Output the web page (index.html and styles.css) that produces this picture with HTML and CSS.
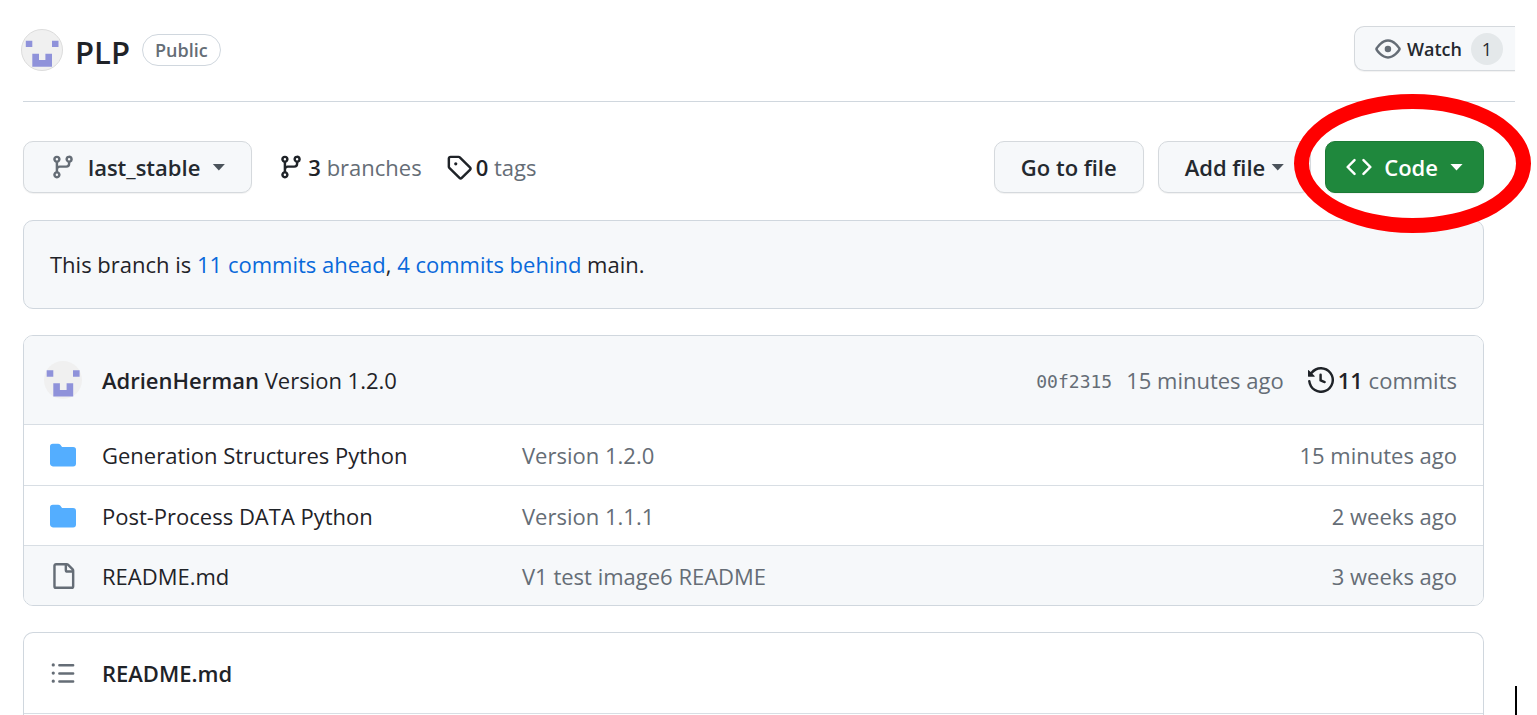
FILE: index.html
```html
<!DOCTYPE html>
<html lang="en">
<head>
<meta charset="utf-8">
<meta name="viewport" content="width=device-width, initial-scale=1">
<title>PLP</title>
<link rel="stylesheet" href="styles.css">
</head>
<body>
<svg class="sprite" aria-hidden="true">
  <symbol id="branch" viewBox="0 0 16 16"><path d="M9.5 3.25a2.25 2.25 0 1 1 3 2.122V6A2.5 2.5 0 0 1 10 8.5H6a1 1 0 0 0-1 1v1.128a2.251 2.251 0 1 1-1.5 0V5.372a2.25 2.25 0 1 1 1.5 0v1.836A2.493 2.493 0 0 1 6 7h4a1 1 0 0 0 1-1v-.628A2.25 2.25 0 0 1 9.5 3.25Zm-6 0a.75.75 0 1 0 1.5 0 .75.75 0 0 0-1.5 0Zm8.25-.75a.75.75 0 1 0 0 1.5.75.75 0 0 0 0-1.5ZM4.25 12a.75.75 0 1 0 0 1.5.75.75 0 0 0 0-1.5Z"/></symbol>
  <symbol id="folder" viewBox="0 0 16 16"><path d="M1.75 1A1.75 1.75 0 0 0 0 2.75v10.5C0 14.216.784 15 1.75 15h12.5A1.75 1.75 0 0 0 16 13.25v-8.5A1.75 1.75 0 0 0 14.25 3H7.5a.25.25 0 0 1-.2-.1l-.9-1.2C6.07 1.26 5.55 1 5 1H1.75Z"/></symbol>
</svg>

<header class="repo-header">
  <svg class="avatar avatar-large" viewBox="0 0 42 42"><circle cx="21" cy="21" r="20.500" fill="#f0f0f0" stroke="#dcdcdc"/><path fill="#8f92da" d="M4.800 11.700h6.500V18H4.800ZM31 11.700h6.500V18H31ZM11.300 24.700H18V31h6.400v-6.300H31v13H11.300Z"/></svg>
  <h1 class="repo-name">PLP</h1>
  <span class="visibility">Public</span>
  <button class="btn watch" type="button">
    <svg class="icon muted" viewBox="0 0 16 16"><path d="M8 2c1.981 0 3.671.992 4.933 2.078 1.27 1.091 2.187 2.345 2.637 3.023a1.62 1.62 0 0 1 0 1.798c-.45.678-1.367 1.932-2.637 3.023C11.67 13.008 9.981 14 8 14c-1.981 0-3.671-.992-4.933-2.078C1.797 10.83.88 9.576.43 8.898a1.62 1.62 0 0 1 0-1.798c.45-.677 1.367-1.931 2.637-3.022C4.33 2.992 6.019 2 8 2ZM1.679 7.932a.12.12 0 0 0 0 .136c.411.622 1.241 1.75 2.366 2.717C5.176 11.758 6.527 12.5 8 12.5c1.473 0 2.825-.742 3.955-1.715 1.124-.967 1.954-2.096 2.366-2.717a.12.12 0 0 0 0-.136c-.412-.621-1.242-1.75-2.366-2.717C10.824 4.242 9.473 3.5 8 3.5c-1.473 0-2.825.742-3.955 1.715-1.124.967-1.954 2.096-2.366 2.717ZM8 10a2 2 0 1 1-.001-3.999A2 2 0 0 1 8 10Z"/></svg>
    <span>Watch</span>
    <span class="counter">1</span>
  </button>
</header>

<main class="content">
  <div class="toolbar">
    <button class="btn branch-btn" type="button">
      <svg class="icon muted"><use href="#branch"/></svg>
      <span>last_stable</span>
      <span class="caret"></span>
    </button>
    <a class="stat" href="#"><svg class="icon"><use href="#branch"/></svg><span><strong>3</strong> branches</span></a>
    <a class="stat" href="#"><svg class="icon" viewBox="0 0 16 16"><path d="M1 7.775V2.75C1 1.784 1.784 1 2.75 1h5.025c.464 0 .91.184 1.238.513l6.25 6.25a1.75 1.75 0 0 1 0 2.474l-5.026 5.026a1.75 1.75 0 0 1-2.474 0l-6.25-6.25A1.752 1.752 0 0 1 1 7.775Zm1.5 0c0 .066.026.13.073.177l6.25 6.25a.25.25 0 0 0 .354 0l5.025-5.025a.25.25 0 0 0 0-.354l-6.25-6.25a.25.25 0 0 0-.177-.073H2.75a.25.25 0 0 0-.25.25ZM6 5a1 1 0 1 1 0 2 1 1 0 0 1 0-2Z"/></svg><span><strong>0</strong> tags</span></a>
    <div class="actions">
      <button class="btn" type="button">Go to file</button>
      <button class="btn add-file" type="button">Add file<span class="caret"></span></button>
      <div class="code-wrap">
        <button class="btn code-btn" type="button">
          <svg class="icon" viewBox="0 0 16 16"><path d="m11.28 3.22 4.25 4.25a.75.75 0 0 1 0 1.060l-4.25 4.25a.749.749 0 0 1-1.275-.326.749.749 0 0 1 .215-.734L13.940 8l-3.720-3.720a.749.749 0 0 1 .326-1.275.749.749 0 0 1 .734.215Zm-6.560 0a.751.751 0 0 1 1.042.018.751.751 0 0 1 .018 1.042L2.060 8l3.720 3.720a.749.749 0 0 1-.326 1.275.749.749 0 0 1-.734-.215L.47 8.530a.75.75 0 0 1 0-1.060Z"/></svg>
          <span>Code</span>
          <span class="caret"></span>
        </button>
        <div class="highlight-ring"></div>
      </div>
    </div>
  </div>

  <p class="box branch-status">This branch is <a href="#">11 commits ahead</a>, <a href="#">4 commits behind</a> main.</p>

  <section class="box files">
    <div class="latest-commit">
      <svg class="avatar" viewBox="0 0 38 38"><circle cx="19" cy="19" r="19" fill="#f0f0f0"/><path fill="#8f92da" d="M2.700 9.300h6.600v6.400H2.700ZM29 9.300h6.600v6.400H29ZM9.300 22.300h6.600V29h6.700v-6.700h6.600v13.300H9.300Z"/></svg>
      <span class="commit-text"><strong>AdrienHerman</strong> Version 1.2.0</span>
      <a class="hash" href="#">00f2315</a>
      <span class="commit-age">15 minutes ago</span>
      <a class="commits" href="#"><svg class="icon" viewBox="0 0 16 16"><path d="m.427 1.927 1.215 1.215a8.002 8.002 0 1 1-1.6 5.685.75.75 0 1 1 1.493-.154 6.5 6.5 0 1 0 1.180-4.458l1.358 1.358A.25.25 0 0 1 3.896 6H.25A.25.25 0 0 1 0 5.750V2.104a.25.25 0 0 1 .427-.177ZM7.750 4a.75.75 0 0 1 .75.75v2.992l2.028.812a.75.75 0 0 1-.557 1.392l-2.500-1A.751.751 0 0 1 7 8.250v-3.500A.75.75 0 0 1 7.750 4Z"/></svg><span><strong>11</strong> commits</span></a>
    </div>
    <table class="file-table">
      <tbody>
        <tr>
          <td class="col-icon"><svg class="icon folder"><use href="#folder"/></svg></td>
          <td class="col-name"><a href="#">Generation Structures Python</a></td>
          <td class="col-message">Version 1.2.0</td>
          <td class="col-age">15 minutes ago</td>
        </tr>
        <tr>
          <td class="col-icon"><svg class="icon folder"><use href="#folder"/></svg></td>
          <td class="col-name"><a href="#">Post-Process DATA Python</a></td>
          <td class="col-message">Version 1.1.1</td>
          <td class="col-age">2 weeks ago</td>
        </tr>
        <tr class="active">
          <td class="col-icon"><svg class="icon muted" viewBox="0 0 16 16"><path d="M2 1.75C2 .784 2.784 0 3.75 0h6.586c.464 0 .909.184 1.237.513l2.914 2.914c.329.328.513.773.513 1.237v9.586A1.75 1.75 0 0 1 13.25 16h-9.500A1.75 1.75 0 0 1 2 14.250Zm1.750-.250a.25.25 0 0 0-.25.25v12.500c0 .138.112.25.25.25h9.500a.25.25 0 0 0 .25-.25V6h-2.750A1.75 1.75 0 0 1 9 4.250V1.500Zm6.750.062V4.250c0 .138.112.25.25.25h2.688l-.011-.013-2.914-2.914-.013-.011Z"/></svg></td>
          <td class="col-name"><a href="#">README.md</a></td>
          <td class="col-message">V1 test image6 README</td>
          <td class="col-age">3 weeks ago</td>
        </tr>
      </tbody>
    </table>
  </section>

  <section class="box readme">
    <div class="readme-header">
      <svg class="icon muted" viewBox="0 0 16 16"><path d="M5.750 2.500h8.500a.75.75 0 0 1 0 1.500h-8.500a.75.75 0 0 1 0-1.500Zm0 5h8.500a.75.75 0 0 1 0 1.500h-8.500a.75.75 0 0 1 0-1.500Zm0 5h8.500a.75.75 0 0 1 0 1.500h-8.500a.75.75 0 0 1 0-1.500ZM2 14a1 1 0 1 1 0-2 1 1 0 0 1 0 2Zm1-6a1 1 0 1 1-2 0 1 1 0 0 1 2 0ZM2 4a1 1 0 1 1 0-2 1 1 0 0 1 0 2Z"/></svg>
      <h2>README.md</h2>
    </div>
  </section>
</main>
<div class="text-cursor"></div>
</body>
</html>
```

FILE: styles.css
```css
* {
  box-sizing: border-box;
}

body {
  position: relative;
  display: flex;
  flex-direction: column;
  min-height: 100vh;
  margin: 0;
  padding: 26px 22px 0 23px;
  background: #fff;
  color: #1f2328;
  font-family: "Open Sans", "Noto Sans", sans-serif;
  font-size: 22px;
  line-height: 30px;
}

a {
  color: inherit;
  text-decoration: none;
}

strong {
  color: #1f2328;
  font-weight: 600;
}

.sprite {
  position: absolute;
  width: 0;
  height: 0;
}

.icon {
  display: block;
  flex: none;
  width: 26px;
  height: 26px;
  fill: currentColor;
}

.muted {
  color: #656d76;
}

.folder {
  color: #54aeff;
}

.avatar {
  flex: none;
  width: 38px;
  height: 38px;
}

.avatar-large {
  width: 42px;
  height: 42px;
  margin: 3px 0 0 -2px;
}

.caret {
  width: 13px;
  height: 7px;
  background: currentColor;
  clip-path: polygon(0 0, 100% 0, 50% 100%);
}

.btn {
  display: flex;
  align-items: center;
  height: 52px;
  padding: 0 26px;
  border: 1px solid #d5d9dd;
  border-radius: 10px;
  background: #f6f8fa;
  box-shadow: 0 1px 1px #1f23280f;
  color: #24292f;
  font: inherit;
  font-weight: 600;
  white-space: nowrap;
}

.repo-header {
  display: flex;
  flex: none;
  align-items: flex-start;
  height: 76px;
  border-bottom: 1px solid #d0d7de;
}

.repo-name {
  margin: 6px 12px 0;
  font-size: 31px;
  font-weight: 600;
  line-height: 40px;
}

.visibility {
  margin-top: 8px;
  padding: 0 12px;
  border: 1px solid #d0d7de;
  border-radius: 16px;
  color: #656d76;
  font-size: 18px;
  font-weight: 600;
}

.watch {
  height: 45px;
  gap: 6px;
  margin-left: auto;
  padding: 0 12px 0 20px;
  border-right: 0;
  border-radius: 10px 0 0 10px;
  font-size: 18px;
}

.counter {
  width: 32px;
  height: 32px;
  margin-left: 3px;
  border-radius: 50%;
  background: #e4e8ea;
  font-weight: 400;
  line-height: 32px;
  text-align: center;
}

.content {
  display: flex;
  flex: 1;
  flex-direction: column;
  padding: 39px 31px 0 0;
}

.toolbar {
  display: flex;
  align-items: center;
}

.branch-btn {
  gap: 12px;
  margin-right: 26px;
}

.branch-btn .caret,
.add-file .caret {
  background: #4b535b;
}

.stat {
  display: flex;
  align-items: center;
  gap: 4px;
  margin-right: 24px;
  color: #656d76;
}

.stat .icon,
.commits .icon {
  color: #1f2328;
}

.actions {
  display: flex;
  gap: 14px;
  margin-left: auto;
}

.add-file {
  gap: 6px;
}

.code-wrap {
  position: relative;
}

.code-btn {
  gap: 12px;
  padding: 0 20px;
  border-color: #1c7a35;
  background: #1f883d;
  color: #fff;
}

.highlight-ring {
  position: absolute;
  inset: -47px -47px -40px -31px;
  border: 15px solid #f00;
  border-radius: 50%;
  pointer-events: none;
}

.box {
  border: 1px solid #d0d7de;
  border-radius: 10px;
}

.branch-status {
  margin: 27px 0 26px;
  padding: 28px 26px 29px;
  background: #f6f8fa;
}

.branch-status a {
  color: #0969da;
}

.files {
  overflow: hidden;
}

.latest-commit {
  display: flex;
  align-items: center;
  height: 89px;
  padding: 0 26px 0 20px;
  border-bottom: 1px solid #d8dee4;
  background: #f6f8fa;
}

.commit-text {
  flex: 1;
  padding-left: 20px;
}

.hash {
  margin-right: 14px;
  padding-top: 3px;
  color: #656d76;
  font-family: "DejaVu Sans Mono", monospace;
  font-size: 18px;
}

.commit-age {
  margin-right: 24px;
  color: #656d76;
}

.commits {
  display: flex;
  align-items: center;
  gap: 4px;
  color: #656d76;
}

.file-table {
  width: 100%;
  border-spacing: 0;
  table-layout: fixed;
}

.file-table td {
  height: 60px;
  padding: 0;
}

.file-table tr + tr td {
  border-top: 1px solid #d8dee4;
}

.active {
  background: #f6f8fa;
}

.file-table .col-icon {
  width: 78px;
  padding-left: 26px;
}

.col-name {
  width: 420px;
}

.col-message {
  color: #656d76;
}

.file-table .col-age {
  width: 260px;
  padding-right: 26px;
  color: #656d76;
  text-align: right;
}

.readme {
  flex: 1;
  margin-top: 26px;
  border-bottom: 0;
  border-radius: 10px 10px 0 0;
}

.readme-header {
  display: flex;
  align-items: center;
  gap: 26px;
  height: 81px;
  padding: 0 26px;
  border-bottom: 1px solid #d8dee4;
}

.readme-header h2 {
  margin: 0;
  font-size: 22px;
  font-weight: 600;
}

.text-cursor {
  position: absolute;
  right: 20px;
  bottom: 0;
  width: 2px;
  height: 29px;
  background: #000;
}
```
